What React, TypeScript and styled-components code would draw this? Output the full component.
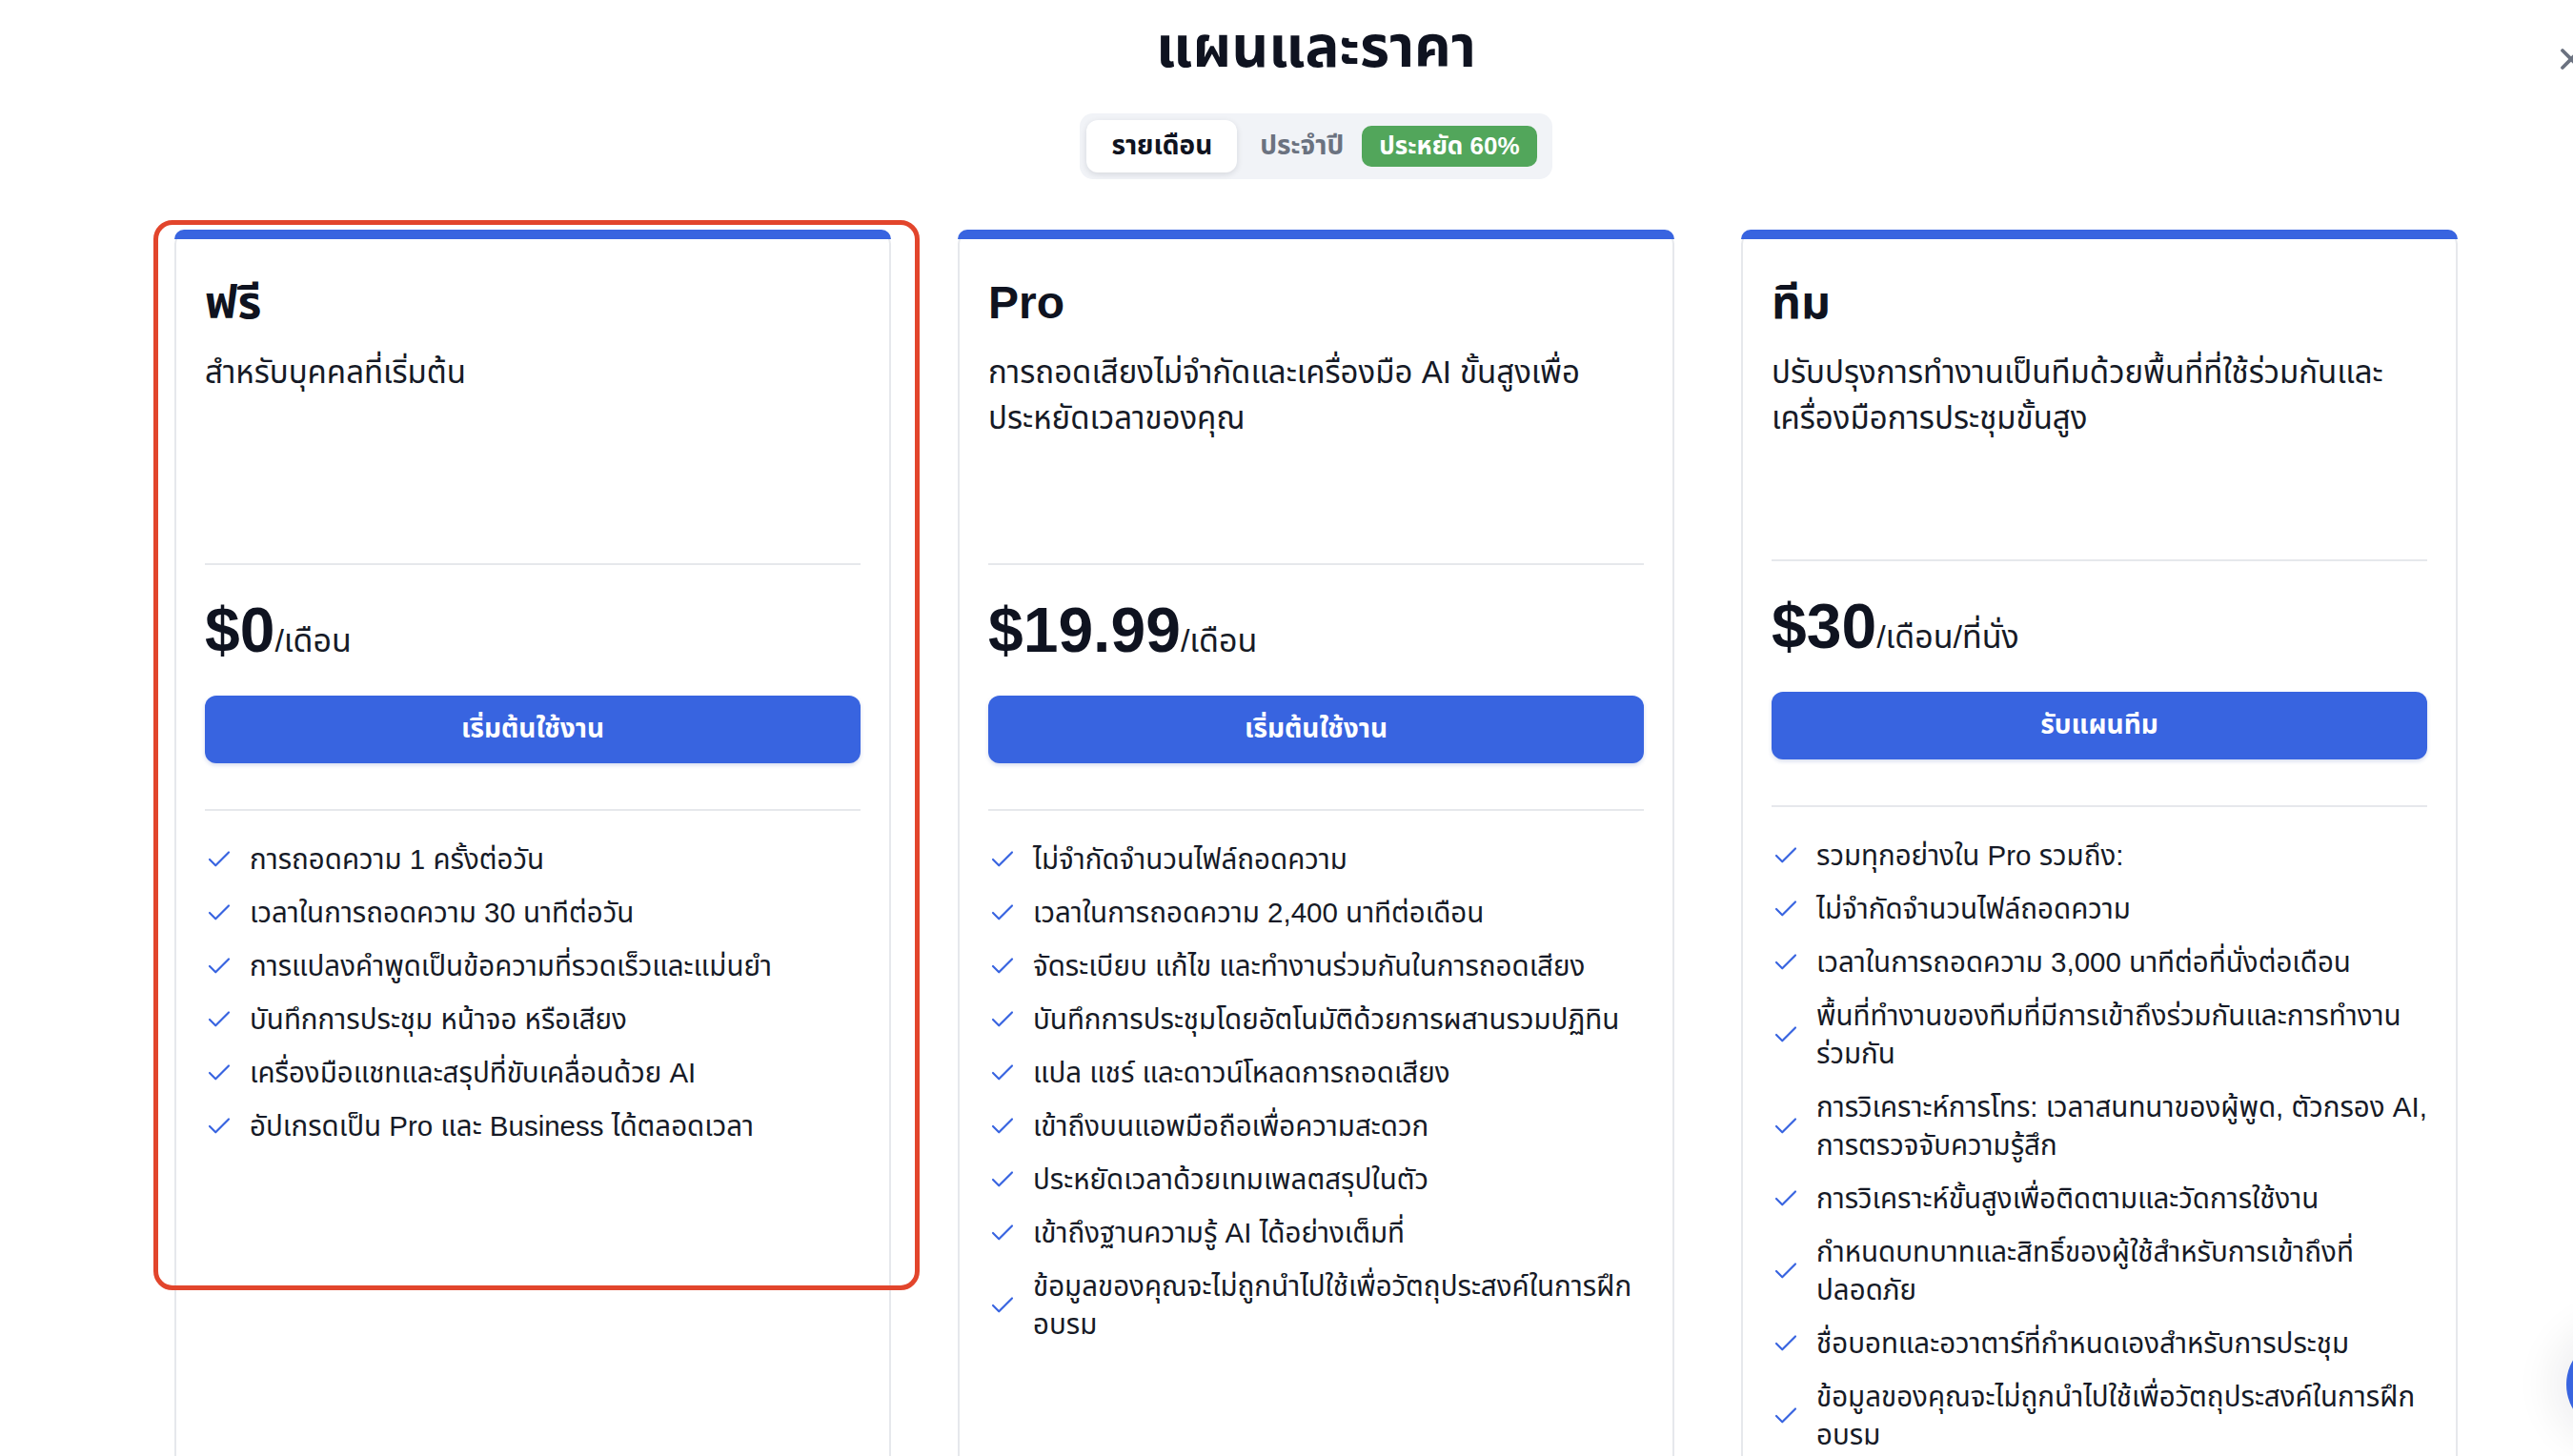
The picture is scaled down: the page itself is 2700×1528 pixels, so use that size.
import React from "react";
import styled, { createGlobalStyle } from "styled-components";
import { Check, X } from "lucide-react";

const blue = "#3864e0";
const ink = "#0f1320";
const line = "#e6e8ec";

const GlobalStyle = createGlobalStyle`
  html, body {
    margin: 0;
    padding: 0;
    overflow: hidden;
    background: #ffffff;
  }
  body {
    font-family: "Liberation Sans", "Noto Sans Thai", "Noto Sans", sans-serif;
    color: ${ink};
  }
  * { box-sizing: border-box; }
`;

const Page = styled.div`
  position: relative;
  width: 2700px;
  height: 1528px;
  overflow: hidden;
  display: flex;
  flex-direction: column;
  align-items: center;
  padding: 12px 0 0 62px;
`;

const Title = styled.h1`
  margin: 0;
  font-size: 60px;
  line-height: 76px;
  font-weight: 700;
  color: ${ink};
`;

const Toggle = styled.div`
  margin-top: 31px;
  display: flex;
  align-items: center;
  padding: 7px 16px 7px 7px;
  background: #f1f3f7;
  border-radius: 14px;
  height: 69px;
`;

const TabButton = styled.button<{ $active?: boolean }>`
  border: none;
  font-family: inherit;
  font-size: 28px;
  font-weight: 700;
  height: 55px;
  display: flex;
  align-items: center;
  gap: 19px;
  padding: ${(p) => (p.$active ? "0 26px" : "0 0 0 24px")};
  border-radius: 12px;
  cursor: pointer;
  background: ${(p) => (p.$active ? "#ffffff" : "transparent")};
  color: ${(p) => (p.$active ? ink : "#6b7280")};
  box-shadow: ${(p) => (p.$active ? "0 2px 6px rgba(15, 23, 42, 0.12)" : "none")};
`;

const SaveBadge = styled.span`
  display: inline-flex;
  align-items: center;
  height: 43px;
  padding: 0 18px;
  border-radius: 10px;
  background: #52a65b;
  color: #ffffff;
  font-size: 26px;
  font-weight: 700;
`;

const Grid = styled.div`
  margin-top: 53px;
  display: grid;
  grid-template-columns: repeat(3, 752px);
  gap: 70px;
  align-items: stretch;
`;

const Card = styled.div`
  position: relative;
  min-height: 1400px;
  border: 2px solid ${line};
  border-top: none;
  border-radius: 16px;
  background: #ffffff;
`;

const Bar = styled.div`
  height: 10px;
  margin: 0 -2px;
  background: ${blue};
  border-radius: 16px 16px 0 0;
`;

const Body = styled.div`
  padding: 38px 30px 40px 30px;
`;

const Header = styled.div<{ $lift?: number }>`
  min-height: ${(p) => 302 - (p.$lift ?? 0)}px;
`;

const PlanName = styled.h2`
  margin: 0;
  font-size: 48px;
  line-height: 58px;
  font-weight: 700;
`;

const PlanDesc = styled.p`
  margin: 20px 0 0;
  font-size: 33px;
  line-height: 48px;
  color: #161a26;
`;

const Divider = styled.hr`
  margin: 0;
  border: none;
  border-top: 2px solid ${line};
`;

const PriceRow = styled.div`
  margin-top: 30px;
  display: flex;
  align-items: baseline;
`;

const Amount = styled.span`
  font-size: 66px;
  line-height: 77px;
  font-weight: 700;
`;

const Unit = styled.span`
  font-size: 34px;
  color: #161a26;
`;

const Cta = styled.button`
  margin: 30px 0 48px;
  width: 100%;
  height: 71px;
  border: none;
  border-radius: 12px;
  background: ${blue};
  color: #ffffff;
  font-family: inherit;
  font-size: 28px;
  font-weight: 700;
  box-shadow: 0 2px 4px rgba(30, 60, 160, 0.18);
  cursor: pointer;
`;

const Features = styled.ul`
  list-style: none;
  margin: 31px 0 0;
  padding: 0;
  display: flex;
  flex-direction: column;
  gap: 16px;
`;

const Feature = styled.li`
  display: flex;
  align-items: center;
  gap: 17px;
  font-size: 29.5px;
  line-height: 40px;
  color: #161a26;
  svg {
    flex: none;
    color: ${blue};
  }
`;

const Highlight = styled.div`
  position: absolute;
  left: -24px;
  right: -32px;
  top: -10px;
  height: 1123px;
  border: 5px solid #e2452c;
  border-radius: 20px;
  pointer-events: none;
`;

const CloseButton = styled.button`
  position: absolute;
  top: 44px;
  right: -16px;
  border: none;
  background: none;
  padding: 0;
  color: #6b7280;
  cursor: pointer;
`;

const ChatBubble = styled.div`
  position: absolute;
  left: 2693px;
  top: 1403px;
  width: 100px;
  height: 100px;
  border-radius: 50%;
  background: ${blue};
  box-shadow: 0 0 40px 18px rgba(15, 23, 42, 0.06);
`;

type Plan = {
  name: string;
  desc: string;
  price: string;
  unit: string;
  cta: string;
  features: string[];
  highlighted?: boolean;
  lift?: number;
};

const plans: Plan[] = [
  {
    name: "ฟรี",
    desc: "สำหรับบุคคลที่เริ่มต้น",
    price: "$0",
    unit: "/เดือน",
    cta: "เริ่มต้นใช้งาน",
    highlighted: true,
    features: [
      "การถอดความ 1 ครั้งต่อวัน",
      "เวลาในการถอดความ 30 นาทีต่อวัน",
      "การแปลงคำพูดเป็นข้อความที่รวดเร็วและแม่นยำ",
      "บันทึกการประชุม หน้าจอ หรือเสียง",
      "เครื่องมือแชทและสรุปที่ขับเคลื่อนด้วย AI",
      "อัปเกรดเป็น Pro และ Business ได้ตลอดเวลา",
    ],
  },
  {
    name: "Pro",
    desc: "การถอดเสียงไม่จำกัดและเครื่องมือ AI ขั้นสูงเพื่อประหยัดเวลาของคุณ",
    price: "$19.99",
    unit: "/เดือน",
    cta: "เริ่มต้นใช้งาน",
    features: [
      "ไม่จำกัดจำนวนไฟล์ถอดความ",
      "เวลาในการถอดความ 2,400 นาทีต่อเดือน",
      "จัดระเบียบ แก้ไข และทำงานร่วมกันในการถอดเสียง",
      "บันทึกการประชุมโดยอัตโนมัติด้วยการผสานรวมปฏิทิน",
      "แปล แชร์ และดาวน์โหลดการถอดเสียง",
      "เข้าถึงบนแอพมือถือเพื่อความสะดวก",
      "ประหยัดเวลาด้วยเทมเพลตสรุปในตัว",
      "เข้าถึงฐานความรู้ AI ได้อย่างเต็มที่",
      "ข้อมูลของคุณจะไม่ถูกนำไปใช้เพื่อวัตถุประสงค์ในการฝึกอบรม",
    ],
  },
  {
    name: "ทีม",
    desc: "ปรับปรุงการทำงานเป็นทีมด้วยพื้นที่ที่ใช้ร่วมกันและเครื่องมือการประชุมขั้นสูง",
    price: "$30",
    unit: "/เดือน/ที่นั่ง",
    cta: "รับแผนทีม",
    lift: 4,
    features: [
      "รวมทุกอย่างใน Pro รวมถึง:",
      "ไม่จำกัดจำนวนไฟล์ถอดความ",
      "เวลาในการถอดความ 3,000 นาทีต่อที่นั่งต่อเดือน",
      "พื้นที่ทำงานของทีมที่มีการเข้าถึงร่วมกันและการทำงานร่วมกัน",
      "การวิเคราะห์การโทร: เวลาสนทนาของผู้พูด, ตัวกรอง AI, การตรวจจับความรู้สึก",
      "การวิเคราะห์ขั้นสูงเพื่อติดตามและวัดการใช้งาน",
      "กำหนดบทบาทและสิทธิ์ของผู้ใช้สำหรับการเข้าถึงที่ปลอดภัย",
      "ชื่อบอทและอวาตาร์ที่กำหนดเองสำหรับการประชุม",
      "ข้อมูลของคุณจะไม่ถูกนำไปใช้เพื่อวัตถุประสงค์ในการฝึกอบรม",
    ],
  },
];

const PlanCard = ({ plan }: { plan: Plan }) => (
  <Card>
    <Bar />
    <Body>
      <Header $lift={plan.lift}>
        <PlanName>{plan.name}</PlanName>
        <PlanDesc>{plan.desc}</PlanDesc>
      </Header>
      <Divider />
      <PriceRow>
        <Amount>{plan.price}</Amount>
        <Unit>{plan.unit}</Unit>
      </PriceRow>
      <Cta>{plan.cta}</Cta>
      <Divider />
      <Features>
        {plan.features.map((f) => (
          <Feature key={f}>
            <Check size={30} strokeWidth={1.7} />
            <span>{f}</span>
          </Feature>
        ))}
      </Features>
    </Body>
    {plan.highlighted && <Highlight />}
  </Card>
);

export default function App() {
  return (
    <>
      <GlobalStyle />
      <Page>
        <CloseButton aria-label="ปิด">
          <X size={36} strokeWidth={2.5} />
        </CloseButton>
        <Title>แผนและราคา</Title>
        <Toggle>
          <TabButton $active>รายเดือน</TabButton>
          <TabButton>
            ประจำปี
            <SaveBadge>ประหยัด 60%</SaveBadge>
          </TabButton>
        </Toggle>
        <Grid>
          {plans.map((p) => (
            <PlanCard key={p.name} plan={p} />
          ))}
        </Grid>
        <ChatBubble />
      </Page>
    </>
  );
}
